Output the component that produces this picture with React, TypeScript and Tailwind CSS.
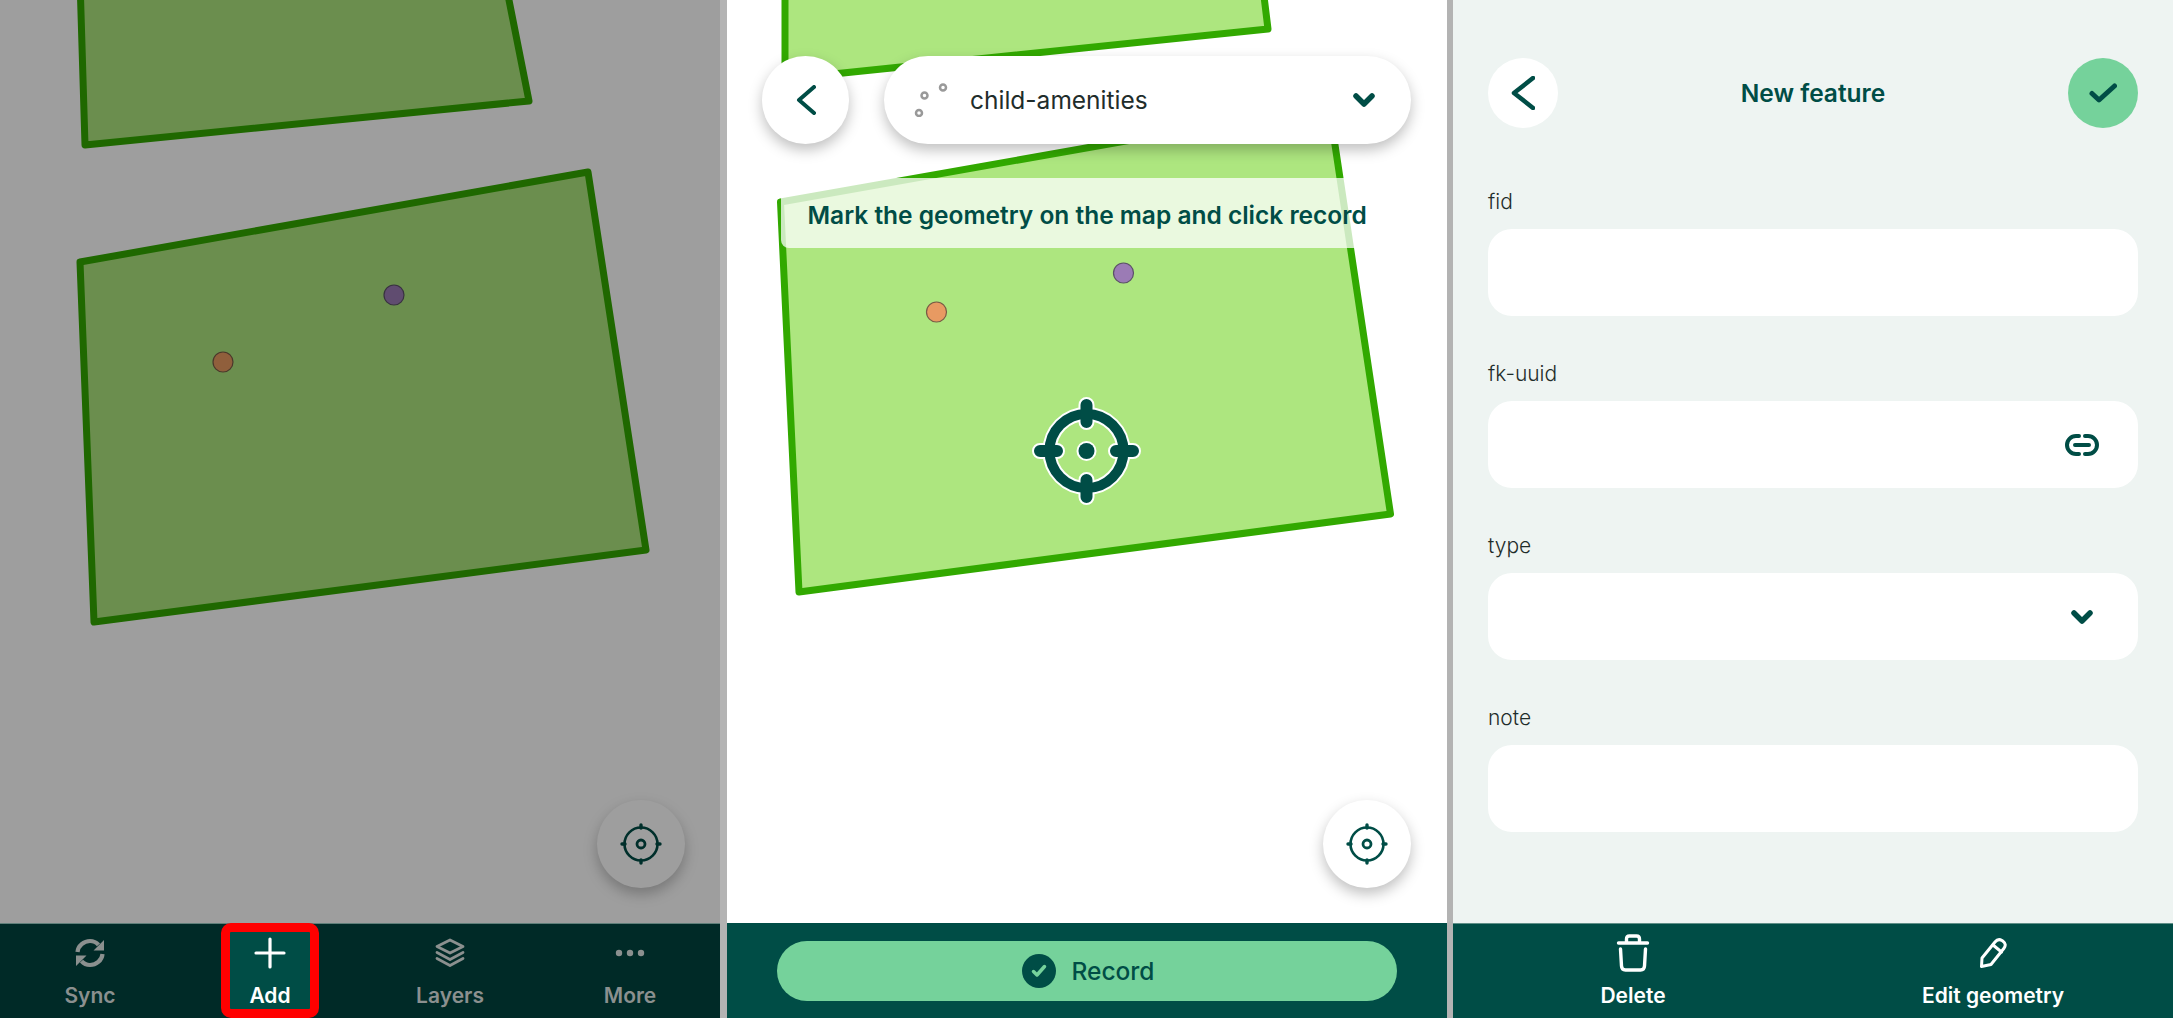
import type { ReactNode } from "react";

const TEAL = "#004d46";

function LocateIcon({ color }: { color: string }) {
  return (
    <svg width="42" height="42" viewBox="0 0 42 42" fill="none" stroke={color}>
      <circle cx="21" cy="21" r="16.5" strokeWidth="2.6" />
      <circle cx="21" cy="21" r="4" strokeWidth="2.8" />
      <path d="M21 2v3M21 37v3M2 21h3M37 21h3" strokeWidth="3.4" strokeLinecap="round" />
    </svg>
  );
}

function LocateButton() {
  return (
    <div className="absolute right-[35.5px] bottom-[35px] flex h-[88px] w-[88px] items-center justify-center rounded-full bg-white shadow-[0_6px_14px_rgba(0,0,0,0.25)]">
      <LocateIcon color={TEAL} />
    </div>
  );
}

function Chevron() {
  return (
    <svg width="22" height="14" viewBox="0 0 22 14" fill="none" stroke={TEAL} strokeWidth="5.5" strokeLinecap="round" strokeLinejoin="round">
      <path d="M3 3l8 8 8-8" />
    </svg>
  );
}

function BackIcon({ w, h, sw }: { w: number; h: number; sw: number }) {
  return (
    <svg width={w} height={h} viewBox={`0 0 ${w} ${h}`} fill="none" stroke={TEAL} strokeWidth={sw} strokeLinecap="round" strokeLinejoin="round">
      <path d={`M${w - 2} 2L3 ${h / 2}L${w - 2} ${h - 2}`} />
    </svg>
  );
}

function MapDots({ orange, purple }: { orange: [number, number]; purple: [number, number] }) {
  return (
    <>
      <circle cx={orange[0]} cy={orange[1]} r="10" fill="#e89a62" stroke="#7a5a45" strokeWidth="1.2" />
      <circle cx={purple[0]} cy={purple[1]} r="10" fill="#9b7bb5" stroke="#5c5068" strokeWidth="1.2" />
    </>
  );
}

function Crosshair() {
  const ticks = "M359.5 405v17M359.5 480v17M313 451h17M389 451h17";
  return (
    <g fill="none">
      <circle cx="359.5" cy="451" r="37" stroke="#fff" strokeWidth="14" />
      <path d={ticks} stroke="#fff" strokeWidth="16" strokeLinecap="round" />
      <circle cx="359.5" cy="451" r="10" fill="#fff" stroke="none" />
      <circle cx="359.5" cy="451" r="37" stroke={TEAL} strokeWidth="10" />
      <path d={ticks} stroke={TEAL} strokeWidth="12" strokeLinecap="round" />
      <circle cx="359.5" cy="451" r="8" fill={TEAL} stroke="none" />
    </g>
  );
}

function SyncIcon() {
  return (
    <svg width="32" height="32" viewBox="0 0 32 32" fill="none" stroke="#8b908f" strokeWidth="4.2">
      <path d="M3.5 15C4 8.5 10 4 16 4c3.5 0 6.500 1.500 8.500 3.800" />
      <path d="M28.500 17c-.5 6.500-6.500 11-12.500 11-3.500 0-6.500-1.500-8.500-3.800" />
      <path d="M30 3v10.500H19.500zM2 29V18.500h10.500z" fill="#8b908f" stroke="none" />
    </svg>
  );
}

function LayersIcon() {
  return (
    <svg width="32" height="32" viewBox="0 0 32 32" fill="none" stroke="#8b908f" strokeWidth="2.8" strokeLinejoin="round" strokeLinecap="round">
      <path d="M16 3L29 9.5L16 16L3 9.5Z" />
      <path d="M3 15.500L16 22.500L29 15.500" />
      <path d="M3 21.500L16 28.500L29 21.500" />
    </svg>
  );
}

function PlusIcon() {
  return (
    <svg width="32" height="32" viewBox="0 0 32 32" stroke="#fff" strokeWidth="3.2" strokeLinecap="round">
      <path d="M16 2v28M2 16h28" />
    </svg>
  );
}

function DotsIcon() {
  return (
    <svg width="32" height="32" viewBox="0 0 32 32" fill="#8b908f">
      <circle cx="5" cy="16" r="3.2" />
      <circle cx="16" cy="16" r="3.2" />
      <circle cx="27" cy="16" r="3.2" />
    </svg>
  );
}

function TrashIcon() {
  return (
    <svg width="34" height="38" viewBox="0 0 34 38" fill="none" stroke="#fff" strokeWidth="3.4" strokeLinecap="round" strokeLinejoin="round">
      <path d="M2.500 9h29" />
      <path d="M10.500 8V5c0-2 1-3 3-3h7c2 0 3 1 3 3v3" />
      <path d="M4.500 15l1 17c.1 2.500 1.500 4 4 4h15c2.500 0 3.900-1.500 4-4l1-17" />
    </svg>
  );
}

function PencilIcon() {
  return (
    <svg width="30" height="32" viewBox="0 0 30 32" fill="none" stroke="#fff" strokeWidth="3" strokeLinecap="round" strokeLinejoin="round">
      <path d="M4 21L17 5c2-2.500 4.500-3 7-1.500l1 .7c2.500 1.800 3 4.500 1 7L13 27.500L3.500 29.500Z" />
      <path d="M15 8l8.500 7" />
    </svg>
  );
}

function NavItem({ icon, label, active, muted }: { icon: ReactNode; label: string; active?: boolean; muted?: boolean }) {
  return (
    <div className="relative flex flex-1 flex-col items-center pt-[13px]">
      {active && (
        <div className="absolute top-[-1px] left-1/2 h-[95px] w-[98px] -translate-x-1/2 rounded-[10px] border-[9px] border-[#ff0000] bg-[#004d46]" />
      )}
      <div className="relative flex h-[32px] items-center justify-center">{icon}</div>
      <span className={`relative mt-[13px] text-[21px] leading-[28px] font-semibold ${muted ? "text-[#8b908f]" : "text-white"}`}>{label}</span>
    </div>
  );
}

function Field({ label, children }: { label: string; children?: ReactNode }) {
  return (
    <div>
      <div className="mb-[13px] text-[21px] leading-[28px] font-light text-[#1f2d2b]">{label}</div>
      <div className="flex h-[87px] items-center justify-end rounded-[24px] bg-white pr-[38px]">{children}</div>
    </div>
  );
}

function AddPanel() {
  return (
    <div className="flex h-full w-[720px] shrink-0 flex-col">
      <div className="relative h-[923px] overflow-hidden bg-white">
        <svg className="h-full w-full" viewBox="0 0 720 923" fill="#ade67f" stroke="#32a900" strokeWidth="7" strokeLinejoin="round">
          <path d="M80 -20L85 145L529 101L505 -20Z" />
          <path d="M80 262L588 172L646 550L94 622Z" />
          <MapDots orange={[223, 362]} purple={[394, 295]} />
        </svg>
        <LocateButton />
        <div className="absolute inset-0 bg-black/[0.38]" />
      </div>
      <div className="flex h-[95px] border-t border-[#5f7f7a] bg-[#002a27]">
        <NavItem icon={<SyncIcon />} label="Sync" muted />
        <NavItem icon={<PlusIcon />} label="Add" active />
        <NavItem icon={<LayersIcon />} label="Layers" muted />
        <NavItem icon={<DotsIcon />} label="More" muted />
      </div>
    </div>
  );
}

function RecordPanel() {
  return (
    <div className="flex h-full w-[720px] shrink-0 flex-col">
      <div className="relative h-[923px] overflow-hidden bg-white">
        <svg className="h-full w-full" viewBox="0 0 720 923" fill="#ade67f" stroke="#32a900" strokeWidth="7" strokeLinejoin="round">
          <path d="M58 -20L58 79L541 29L535 -20Z" />
          <path d="M53.500 202L602 105L663.500 514L72 592Z" />
          <MapDots orange={[209.5, 312]} purple={[396.5, 273]} />
          <Crosshair />
        </svg>
        <div className="absolute top-[56px] right-[35.5px] left-[35.5px] flex items-center gap-[35px]">
          <div className="flex h-[88px] w-[87px] shrink-0 items-center justify-center rounded-full bg-white shadow-[0_6px_14px_rgba(0,0,0,0.25)]">
            <BackIcon w={20} h={30} sw={4} />
          </div>
          <div className="flex h-[88px] flex-1 items-center justify-between rounded-full bg-white pr-[36px] pl-[30px] shadow-[0_6px_14px_rgba(0,0,0,0.25)]">
            <div className="flex items-center gap-[22px]">
              <svg width="34" height="34" viewBox="0 0 34 34" fill="#fff" stroke="#999" strokeWidth="2.5">
                <circle cx="29" cy="4.5" r="3" />
                <circle cx="10.5" cy="12.5" r="3" />
                <circle cx="5" cy="30" r="3" />
              </svg>
              <span className="text-[24.5px] leading-[32px] text-[#1f2d2b]">child-amenities</span>
            </div>
            <Chevron />
          </div>
        </div>
        <div className="absolute top-[178px] left-[54px] flex h-[70px] items-center rounded-l-[8px] bg-white/75 px-[27px] pt-[3px]">
          <span className="text-[24.5px] leading-[32px] font-semibold text-[#004d46]">Mark the geometry on the map and click record</span>
        </div>
        <LocateButton />
      </div>
      <div className="flex h-[95px] items-start bg-[#004d46] px-[50px] pt-[18px]">
        <div className="flex h-[60px] flex-1 items-center justify-center gap-[15px] rounded-full bg-[#75d29b] pl-[4px]">
          <div className="flex h-[34px] w-[34px] items-center justify-center rounded-full bg-[#004d46]">
            <svg width="16" height="14" viewBox="0 0 16 14" fill="none" stroke="#75d29b" strokeWidth="3.5" strokeLinecap="round" strokeLinejoin="round">
              <path d="M2.500 7.500l3.500 3.500 7.500-8.500" />
            </svg>
          </div>
          <span className="text-[24.5px] leading-[32px] font-medium text-[#004d46]">Record</span>
        </div>
      </div>
    </div>
  );
}

function FormPanel() {
  return (
    <div className="flex h-full w-[720px] shrink-0 flex-col">
      <div className="h-[923px] bg-[#eef4f2] px-[35px] pt-[58px]">
        <div className="flex h-[70px] items-center justify-between">
          <div className="flex h-[70px] w-[70px] items-center justify-center rounded-full bg-white">
            <BackIcon w={24} h={34} sw={4.5} />
          </div>
          <span className="text-[24.5px] leading-[32px] font-semibold text-[#004d46]">New feature</span>
          <div className="flex h-[70px] w-[70px] items-center justify-center rounded-full bg-[#75d29b]">
            <svg width="28" height="20" viewBox="0 0 28 20" fill="none" stroke="#004d46" strokeWidth="5" strokeLinecap="round" strokeLinejoin="round">
              <path d="M3 10.500l7 6.500L25.500 3" />
            </svg>
          </div>
        </div>
        <div className="flex flex-col gap-[44px] pt-[60px]">
          <Field label="fid" />
          <Field label="fk-uuid">
            <svg width="36" height="24" viewBox="0 0 36 24" fill="none" stroke={TEAL} strokeWidth="4" strokeLinecap="round">
              <path d="M15 3H12a9 9 0 0 0 0 18h3M21 3h3a9 9 0 0 1 0 18h-3M11 12h14" />
            </svg>
          </Field>
          <Field label="type">
            <div className="mr-[7px]">
              <Chevron />
            </div>
          </Field>
          <Field label="note" />
        </div>
      </div>
      <div className="flex h-[95px] border-t border-[#5f8f88] bg-[#004d46]">
        <NavItem icon={<TrashIcon />} label="Delete" />
        <NavItem icon={<PencilIcon />} label="Edit geometry" />
      </div>
    </div>
  );
}

export default function App() {
  return (
    <div className="flex h-[1018px] w-[2173px] overflow-hidden bg-[#b3b3b3] font-['Inter',sans-serif]">
      <AddPanel />
      <div className="w-[6.5px] shrink-0" />
      <RecordPanel />
      <div className="w-[6.5px] shrink-0" />
      <FormPanel />
    </div>
  );
}
